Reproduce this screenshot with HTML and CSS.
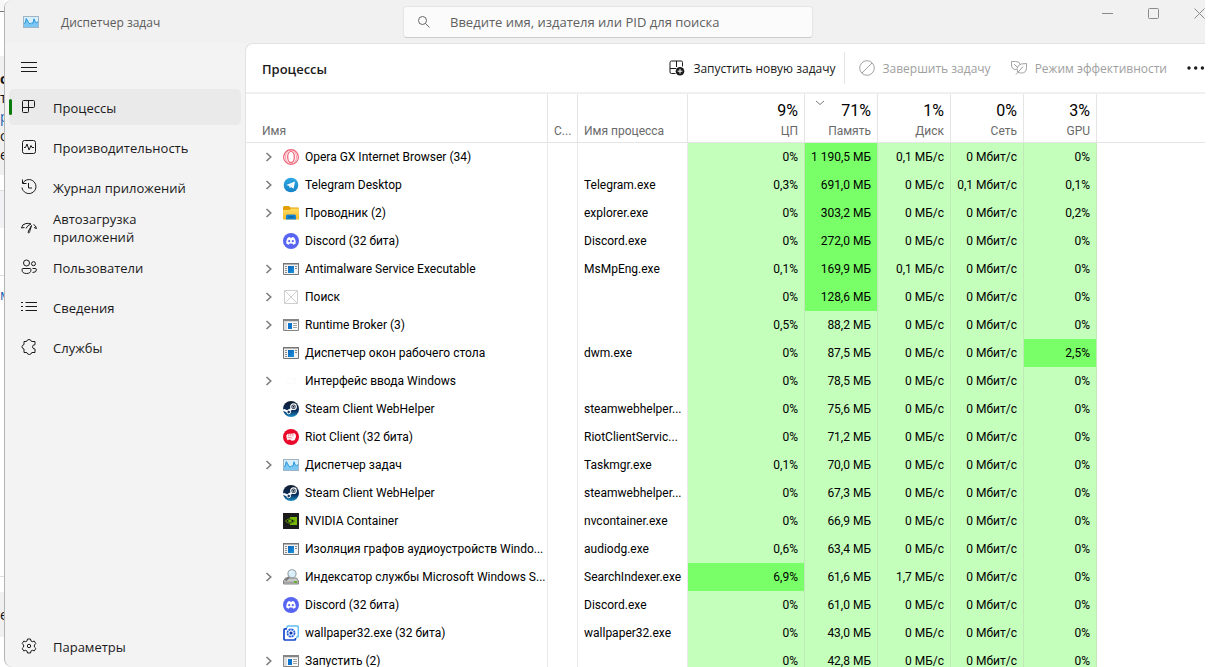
FILE: index.html
```html
<!DOCTYPE html>
<html lang="ru">
<head>
<meta charset="utf-8">
<title>Диспетчер задач</title>
<link rel="stylesheet" href="styles.css">
</head>
<body>
<svg class="sprite" aria-hidden="true">
  <defs>
    <linearGradient id="g-blue" x1="0" y1="0" x2="0" y2="1"><stop offset="0" stop-color="#2fa8e4"/><stop offset="1" stop-color="#1583c6"/></linearGradient>
    <linearGradient id="g-folder" x1="0" y1="0" x2="0" y2="1"><stop offset="0" stop-color="#ffdc62"/><stop offset="1" stop-color="#f7b928"/></linearGradient>
    <linearGradient id="g-steam" x1="0" y1="0" x2="0" y2="1"><stop offset="0" stop-color="#111d2e"/><stop offset=".6" stop-color="#0a2d5c"/><stop offset="1" stop-color="#1a8fc6"/></linearGradient>
    <linearGradient id="g-pane" x1="0" y1="0" x2="1" y2="1"><stop offset="0" stop-color="#0b63b8"/><stop offset="1" stop-color="#1c93dc"/></linearGradient>
  </defs>
  <symbol id="chevron" viewBox="0 0 8 10"><path d="M2.500 1 6.800 5 2.500 9" fill="none" stroke="#7a7a7a" stroke-width="1.500"/></symbol>
  <symbol id="taskmgr" viewBox="0 0 16 16"><rect x=".5" y="2.500" width="15" height="11" fill="#d9effc" stroke="#9fb4c4"/><path d="M1 11V9.500l1.200-.3L3 5l1.600 1.500L6 9l1.200.6L8.500 10l1.200-1L11 5l1 2.500 1.300 1L15 7v6H1z" fill="#7cc6f4"/><path d="M1 9.500l1.300-.5L3.200 4.500l1.500 2.500 1 1.800 1.300 1.200L8.800 9l1.200.3L11 4.800l1.200 3L13.500 9 15 7.500" fill="none" stroke="#2696dc"/></symbol>
  <symbol id="opera" viewBox="0 0 16 16"><circle cx="8" cy="8" r="7.400" fill="#fff4f5" stroke="#ee5a70" stroke-width="1.100"/><ellipse cx="8" cy="8" rx="5.500" ry="7" fill="none" stroke="#f28a9b" stroke-width=".8"/><ellipse cx="8" cy="8" rx="3.300" ry="5.500" fill="#fff" stroke="#ee5a70" stroke-width="1.200"/></symbol>
  <symbol id="telegram" viewBox="0 0 16 16"><circle cx="8" cy="8" r="7.300" fill="url(#g-blue)"/><path d="M3.300 7.900 12 4.500l-1.400 7.200-2.500-1.800-1.300 1.300-.4-2.300z" fill="#fff"/><path d="M6.500 8.900 10.300 6.200 7.300 9.400l-.5 1.700z" fill="#b4dcf3"/></symbol>
  <symbol id="folder" viewBox="0 0 16 16"><path d="M0 2.500Q0 1 1.500 1H6l1.500 1.500H15q1 0 1 1V8H0z" fill="#e2a100"/><path d="M0 5h6.500L8 3.500h8v11H0z" fill="url(#g-folder)"/><path d="M3 14.500V11q0-1.500 1.500-1.500h7Q13 9.500 13 11v3.500z" fill="#1683d0"/><path d="M5.500 12h5" stroke="#07528e" stroke-width="1.200"/></symbol>
  <symbol id="discord" viewBox="0 0 16 16"><circle cx="8" cy="8" r="8" fill="#5865f2"/><path d="M5 4.400 6.700 4l.5.800h1.600l.5-.8 1.700.4c1.300 1.800 1.900 3.700 1.700 6-.8.700-1.600 1.100-2.500 1.300l-.7-1.100H6.500l-.7 1.100c-.9-.2-1.700-.6-2.500-1.300C3.100 8.100 3.700 6.200 5 4.400z" fill="#fff"/><circle cx="6.200" cy="8.200" r="1.100" fill="#5865f2"/><circle cx="9.800" cy="8.200" r="1.100" fill="#5865f2"/></symbol>
  <symbol id="exe" viewBox="0 0 16 16"><path d="M.5 2.500h15v11H.5z" fill="#f2f2f2" stroke="#757575"/><path d="M0 2h16v1.500H0z" fill="#757575"/><path d="M2 5.500h2m-2 2h2m-2 2h2m-2 2h2M12 5.500h2m-2 2h2" stroke="#8b8b8b"/><path d="M5 5h6v7H5z" fill="url(#g-pane)"/></symbol>
  <symbol id="broker" viewBox="0 0 16 16"><path d="M.5 2.500h15v11H.5z" fill="#fafafa" stroke="#858585"/><path d="M0 2h16v2.300H0z" fill="#858585"/><path d="M1 5h3v8H1z" fill="#dedede"/><path d="M5 6h4v6H5z" fill="#1074cc"/><path d="M10 6.500h4m-4 2h4m-4 2h4" stroke="#a0a0a0"/></symbol>
  <symbol id="missing" viewBox="0 0 16 16"><path d="M1.500 1.500h13v13h-13zM2 2l12 12M14 2 2 14" fill="none" stroke="#cfcfcf"/></symbol>
  <symbol id="keyboard" viewBox="0 0 16 16"><path d="M3.500 5.500h9v5h-9z" fill="none" stroke="#fafafa"/></symbol>
  <symbol id="steam" viewBox="0 0 16 16"><circle cx="8" cy="8" r="8" fill="url(#g-steam)"/><path d="M.2 8.700 4.500 10.500 8 8.300l2.200-1.500" fill="none" stroke="#fff" stroke-width="2.200"/><circle cx="10.500" cy="5.700" r="2.800" fill="#13233a" stroke="#fff" stroke-width="1.200"/><circle cx="10.500" cy="5.700" r="1.200" fill="none" stroke="#cfd7e2" stroke-width=".8"/><circle cx="5.700" cy="11" r="1.800" fill="#17375f" stroke="#fff"/></symbol>
  <symbol id="riot" viewBox="0 0 16 16"><circle cx="8" cy="8" r="8" fill="#e9082a"/><path d="M3.300 6.500 4.500 5l7-.8 1.300 1.600.2 2-1.300 3.500-3.200.5-.8-1-1.700-.2-1.400.9-1-2.500z" fill="#fff"/><path d="M5.800 5v2.500M7.800 4.500v2.800M9.900 4.500v3M4.500 8.700h3.500l1.300.8" fill="none" stroke="#e9082a" stroke-width=".5"/></symbol>
  <symbol id="nvidia" viewBox="0 0 16 16"><path d="M0 0h16v16H0z" fill="#1b1b1b"/><path d="M7 4h7v8H7z" fill="#76b900"/><path d="M2 8q4-4 10 0-5 5-10 0z" fill="#1b1b1b"/><path d="M2.500 8Q7 3.500 11.500 8 7 12.500 2.500 8zm2.500 0q2-2.300 4 .2-2 1.800-4-.2z" fill="none" stroke="#629c08" stroke-width=".9"/><circle cx="7" cy="8" r="1.100" fill="#76b900"/></symbol>
  <symbol id="indexer" viewBox="0 0 16 16"><path d="m2.500 9-2 3v3h15v-3l-2-3z" fill="#c8c8c8" stroke="#858585"/><path d="M1 12.500h14v2H1z" fill="#a2a2a2"/><path d="M11 12h3v2h-3z" fill="#62b32d"/><path d="m6 8-3.500 3.500" stroke="#777" stroke-width="2"/><circle cx="9" cy="4.800" r="4.100" fill="#d8effa" stroke="#969fa6" stroke-width="1.100"/><path d="M6.800 4Q7.500 2 9.500 2.200" fill="none" stroke="#fff"/></symbol>
  <symbol id="wallpaper" viewBox="0 0 16 16"><path d="M4 3V2q0-1 1-1h9q1.300 0 1.300 1.300V11q0 1-1.300 1h-1" fill="none" stroke="#60bdf5" stroke-width="1.500"/><path d="M12.500 13v1q0 1-1 1H2q-1 0-1-1V5q0-1.200 1.200-1.200H4" fill="none" stroke="#1746c8" stroke-width="1.700"/><circle cx="8" cy="8" r="3.600" fill="#eaf5ff" stroke="#235bdc" stroke-width="1.700" stroke-dasharray="2.200 .6"/><circle cx="8" cy="8" r="1.600" fill="#1533a8"/></symbol>
</svg>

<div class="desktop">
  <div class="behind" aria-hidden="true">
    <div class="b-top"></div>
    <div class="b-gap"></div>
    <div class="b-post"><b>с</b><span>т</span><span class="blue">р</span><span>об</span><span>е</span></div>
    <div class="b-space"></div>
    <div class="b-bar"></div>
    <div class="b-text"></div>
    <div class="b-long"><span class="blue">м</span></div>
    <div class="b-reply"><span>е</span></div>
    <div class="b-rest"></div>
  </div>

  <div class="window">
    <header class="titlebar">
      <div class="app-name"><svg class="i16"><use href="#taskmgr"/></svg><span>Диспетчер задач</span></div>
      <label class="search">
        <svg class="i16" viewBox="0 0 16 16" fill="none" stroke="#666"><circle cx="6.500" cy="6.500" r="4"/><path d="m9.500 9.500 4 4"/></svg>
        <input type="search" aria-label="Поиск" placeholder="Введите имя, издателя или PID для поиска">
      </label>
      <div class="controls">
        <button type="button" aria-label="Свернуть"><svg viewBox="0 0 11 11"><path d="M0 5.500h11"/></svg></button>
        <button type="button" aria-label="Развернуть"><svg viewBox="0 0 11 11"><rect x=".5" y=".5" width="10" height="10" rx="1"/></svg></button>
        <button type="button" aria-label="Закрыть"><svg viewBox="0 0 11 11"><path d="m.5.5 10 10m0-10-10 10"/></svg></button>
      </div>
    </header>

    <div class="workspace">
      <nav class="sidebar">
        <button type="button" class="burger" aria-label="Меню"><svg class="i16" viewBox="0 0 16 16"><path d="M0 3.500h16M0 8.500h16M0 12.500h16"/></svg></button>
        <a href="#" class="nav-item active"><svg class="i16" viewBox="0 0 16 16"><path d="M2.500 1.500h10q1 0 1 1v5q0 1-1 1h-11m6-7v11q0 1-1 1h-4q-1 0-1-1v-10q0-1 1-1"/></svg><span>Процессы</span></a>
        <a href="#" class="nav-item"><svg class="i16" viewBox="0 0 16 16"><rect x="1.500" y="1.500" width="13" height="13" rx="2"/><path d="M3 8.500h1.500L6 5l2 6 2-4.500 1 2h2"/></svg><span>Производительность</span></a>
        <a href="#" class="nav-item"><svg class="i16" viewBox="0 0 16 16"><path d="M1.500.5v4h4M1.800 4.200A7 7 0 1 1 1 8.500M7.500 4v5H11"/></svg><span>Журнал приложений</span></a>
        <a href="#" class="nav-item narrow"><svg class="i16" viewBox="0 0 16 16"><path d="M.5 9Q1 5 5 4.500q3-.5 5 .5M3.500 8.500l-3 .5M10.500 6.500 7.500 12q-.7 1.800 0 2 .9.200 1.200-1.500l1.800-6zM10 5q-3.500 1-5 4.500M12.500 5.500Q15 6.500 15.500 9.500l-2.500-1"/></svg><span>Автозагрузка приложений</span></a>
        <a href="#" class="nav-item"><svg class="i16" viewBox="0 0 16 16"><circle cx="5.500" cy="4" r="3"/><circle cx="12.500" cy="4.700" r="2"/><path d="M2 9.500h7q1 0 1 1.200 0 3.800-4.500 3.800T1 10.700Q1 9.500 2 9.500zM11.500 9.500H14q1.500 0 1.500 1.300 0 2.700-4 2.700"/></svg><span>Пользователи</span></a>
        <a href="#" class="nav-item"><svg class="i16" viewBox="0 0 16 16"><path d="M4.500 3.500H16m-11.500 4H16m-11.500 4H16M0 3.500h2m-2 4h2m-2 4h2"/></svg><span>Сведения</span></a>
        <a href="#" class="nav-item"><svg class="i16" viewBox="0 0 16 16"><path d="M5.500 2.500Q6 .5 8 .5t2.500 2H14v3.200q-2.500 0-2.500 2.100T14 10v3.500h-3.200q-.5 2-2.500 2t-2.500-2H3V10Q1 9.500 1 7.800t2-2.300v-3z"/></svg><span>Службы</span></a>
        <a href="#" class="nav-item settings"><svg class="i16" viewBox="0 0 16 16"><circle cx="8" cy="8" r="1.700"/><path d="M6.500 1h3l.5 2 1.300.7 2-.6 1.500 2.500L13.400 7v2l1.400 1.400-1.500 2.500-2-.6-1.300.7-.5 2h-3L6 13l-1.300-.7-2 .6-1.500-2.500L2.600 9V7L1.200 5.600l1.500-2.500 2 .6L6 3z"/></svg><span>Параметры</span></a>
      </nav>

      <main class="panel">
        <div class="toolbar">
          <h1>Процессы</h1>
          <button type="button" class="tool"><svg class="i16" viewBox="0 0 16 16" fill="none" stroke="#1a1a1a"><path d="M6.500 13.500h-4q-1.500 0-1.500-1.500V2.500Q1 1 2.500 1h10q1 0 1 1.500v4M1 8.500h6M7.500 1v6"/><circle cx="11" cy="11.200" r="4.300" fill="#1a1a1a" stroke="none"/><path d="M11 8.800v4.800m-2.400-2.400h4.800" stroke="#fff"/></svg><span>Запустить новую задачу</span></button>
          <span class="divider"></span>
          <button type="button" class="tool" disabled><svg class="i16" viewBox="0 0 16 16" fill="none" stroke="#a2a2a2"><circle cx="8" cy="8" r="7.300"/><path d="m3 13 10-10"/></svg><span>Завершить задачу</span></button>
          <button type="button" class="tool" disabled><svg class="i16" viewBox="0 0 16 16" fill="none" stroke="#a2a2a2"><path d="M5.500 9.500Q.5 9.500.5 5V1.500h4q4 0 4.500 2.500M3 4l4 4M6.500 12Q5 8 7.500 5.500 9 3.500 15.500 3.500v4q0 5.500-5 5.500-2.500 0-4-1M12 6.500 5 14.500"/></svg><span>Режим эффективности</span></button>
          <button type="button" class="more" aria-label="Ещё"><svg viewBox="0 0 18 4"><circle cx="2" cy="2" r="1.700"/><circle cx="8.700" cy="2" r="1.700"/><circle cx="15.400" cy="2" r="1.700"/></svg></button>
        </div>

        <div class="table-area">
          <table>
            <colgroup><col class="c-name"><col class="c-status"><col class="c-proc"><col class="c-cpu"><col class="c-num"><col class="c-num"><col class="c-num"><col class="c-num"><col></colgroup>
            <thead>
              <tr>
                <th class="first">Имя</th><th>С...</th><th>Имя процесса</th>
                <th class="n"><b>9%</b>ЦП</th>
                <th class="n sorted"><svg viewBox="0 0 10 6"><path d="m1 1 4 3.500L9 1"/></svg><b>71%</b>Память</th>
                <th class="n"><b>1%</b>Диск</th><th class="n"><b>0%</b>Сеть</th><th class="n"><b>3%</b>GPU</th><th class="rest"></th>
              </tr>
            </thead>
            <tbody>
              <tr><td><div class="name"><svg class="chev"><use href="#chevron"/></svg><svg class="i16"><use href="#opera"/></svg><span>Opera GX Internet Browser (34)</span></div></td><td></td><td></td><td class="n">0%</td><td class="n hot">1 190,5 МБ</td><td class="n">0,1 МБ/с</td><td class="n">0 Мбит/с</td><td class="n">0%</td><td class="rest"></td></tr>
              <tr><td><div class="name"><svg class="chev"><use href="#chevron"/></svg><svg class="i16"><use href="#telegram"/></svg><span>Telegram Desktop</span></div></td><td></td><td>Telegram.exe</td><td class="n">0,3%</td><td class="n hot">691,0 МБ</td><td class="n">0 МБ/с</td><td class="n">0,1 Мбит/с</td><td class="n">0,1%</td><td class="rest"></td></tr>
              <tr><td><div class="name"><svg class="chev"><use href="#chevron"/></svg><svg class="i16"><use href="#folder"/></svg><span>Проводник (2)</span></div></td><td></td><td>explorer.exe</td><td class="n">0%</td><td class="n hot">303,2 МБ</td><td class="n">0 МБ/с</td><td class="n">0 Мбит/с</td><td class="n">0,2%</td><td class="rest"></td></tr>
              <tr><td><div class="name"><svg class="chev"></svg><svg class="i16"><use href="#discord"/></svg><span>Discord (32 бита)</span></div></td><td></td><td>Discord.exe</td><td class="n">0%</td><td class="n hot">272,0 МБ</td><td class="n">0 МБ/с</td><td class="n">0 Мбит/с</td><td class="n">0%</td><td class="rest"></td></tr>
              <tr><td><div class="name"><svg class="chev"><use href="#chevron"/></svg><svg class="i16"><use href="#exe"/></svg><span>Antimalware Service Executable</span></div></td><td></td><td>MsMpEng.exe</td><td class="n">0,1%</td><td class="n hot">169,9 МБ</td><td class="n">0,1 МБ/с</td><td class="n">0 Мбит/с</td><td class="n">0%</td><td class="rest"></td></tr>
              <tr><td><div class="name"><svg class="chev"><use href="#chevron"/></svg><svg class="i16"><use href="#missing"/></svg><span>Поиск</span></div></td><td></td><td></td><td class="n">0%</td><td class="n hot">128,6 МБ</td><td class="n">0 МБ/с</td><td class="n">0 Мбит/с</td><td class="n">0%</td><td class="rest"></td></tr>
              <tr><td><div class="name"><svg class="chev"><use href="#chevron"/></svg><svg class="i16"><use href="#broker"/></svg><span>Runtime Broker (3)</span></div></td><td></td><td></td><td class="n">0,5%</td><td class="n">88,2 МБ</td><td class="n">0 МБ/с</td><td class="n">0 Мбит/с</td><td class="n">0%</td><td class="rest"></td></tr>
              <tr><td><div class="name"><svg class="chev"></svg><svg class="i16"><use href="#exe"/></svg><span>Диспетчер окон рабочего стола</span></div></td><td></td><td>dwm.exe</td><td class="n">0%</td><td class="n">87,5 МБ</td><td class="n">0 МБ/с</td><td class="n">0 Мбит/с</td><td class="n hot">2,5%</td><td class="rest"></td></tr>
              <tr><td><div class="name"><svg class="chev"><use href="#chevron"/></svg><svg class="i16"><use href="#keyboard"/></svg><span>Интерфейс ввода Windows</span></div></td><td></td><td></td><td class="n">0%</td><td class="n">78,5 МБ</td><td class="n">0 МБ/с</td><td class="n">0 Мбит/с</td><td class="n">0%</td><td class="rest"></td></tr>
              <tr><td><div class="name"><svg class="chev"></svg><svg class="i16"><use href="#steam"/></svg><span>Steam Client WebHelper</span></div></td><td></td><td>steamwebhelper...</td><td class="n">0%</td><td class="n">75,6 МБ</td><td class="n">0 МБ/с</td><td class="n">0 Мбит/с</td><td class="n">0%</td><td class="rest"></td></tr>
              <tr><td><div class="name"><svg class="chev"></svg><svg class="i16"><use href="#riot"/></svg><span>Riot Client (32 бита)</span></div></td><td></td><td>RiotClientServic...</td><td class="n">0%</td><td class="n">71,2 МБ</td><td class="n">0 МБ/с</td><td class="n">0 Мбит/с</td><td class="n">0%</td><td class="rest"></td></tr>
              <tr><td><div class="name"><svg class="chev"><use href="#chevron"/></svg><svg class="i16"><use href="#taskmgr"/></svg><span>Диспетчер задач</span></div></td><td></td><td>Taskmgr.exe</td><td class="n">0,1%</td><td class="n">70,0 МБ</td><td class="n">0 МБ/с</td><td class="n">0 Мбит/с</td><td class="n">0%</td><td class="rest"></td></tr>
              <tr><td><div class="name"><svg class="chev"></svg><svg class="i16"><use href="#steam"/></svg><span>Steam Client WebHelper</span></div></td><td></td><td>steamwebhelper...</td><td class="n">0%</td><td class="n">67,3 МБ</td><td class="n">0 МБ/с</td><td class="n">0 Мбит/с</td><td class="n">0%</td><td class="rest"></td></tr>
              <tr><td><div class="name"><svg class="chev"></svg><svg class="i16"><use href="#nvidia"/></svg><span>NVIDIA Container</span></div></td><td></td><td>nvcontainer.exe</td><td class="n">0%</td><td class="n">66,9 МБ</td><td class="n">0 МБ/с</td><td class="n">0 Мбит/с</td><td class="n">0%</td><td class="rest"></td></tr>
              <tr><td><div class="name"><svg class="chev"></svg><svg class="i16"><use href="#exe"/></svg><span>Изоляция графов аудиоустройств Windo...</span></div></td><td></td><td>audiodg.exe</td><td class="n">0,6%</td><td class="n">63,4 МБ</td><td class="n">0 МБ/с</td><td class="n">0 Мбит/с</td><td class="n">0%</td><td class="rest"></td></tr>
              <tr><td><div class="name"><svg class="chev"><use href="#chevron"/></svg><svg class="i16"><use href="#indexer"/></svg><span>Индексатор службы Microsoft Windows S...</span></div></td><td></td><td>SearchIndexer.exe</td><td class="n hot">6,9%</td><td class="n">61,6 МБ</td><td class="n">1,7 МБ/с</td><td class="n">0 Мбит/с</td><td class="n">0%</td><td class="rest"></td></tr>
              <tr><td><div class="name"><svg class="chev"></svg><svg class="i16"><use href="#discord"/></svg><span>Discord (32 бита)</span></div></td><td></td><td>Discord.exe</td><td class="n">0%</td><td class="n">61,0 МБ</td><td class="n">0 МБ/с</td><td class="n">0 Мбит/с</td><td class="n">0%</td><td class="rest"></td></tr>
              <tr><td><div class="name"><svg class="chev"></svg><svg class="i16"><use href="#wallpaper"/></svg><span>wallpaper32.exe (32 бита)</span></div></td><td></td><td>wallpaper32.exe</td><td class="n">0%</td><td class="n">43,0 МБ</td><td class="n">0 МБ/с</td><td class="n">0 Мбит/с</td><td class="n">0%</td><td class="rest"></td></tr>
              <tr><td><div class="name"><svg class="chev"><use href="#chevron"/></svg><svg class="i16"><use href="#broker"/></svg><span>Запустить (2)</span></div></td><td></td><td></td><td class="n">0%</td><td class="n">42,8 МБ</td><td class="n">0 МБ/с</td><td class="n">0 Мбит/с</td><td class="n">0%</td><td class="rest"></td></tr>
            </tbody>
          </table>
        </div>
      </main>
    </div>
  </div>
</div>
</body>
</html>
```
FILE: styles.css
```css
* { box-sizing: border-box; }

body {
  margin: 0;
  background: #fff;
  color: #1a1a1a;
  font: 12px/16px "Open Sans", "Noto Sans", sans-serif;
  overflow: hidden;
}

button { border: 0; padding: 0; background: none; color: inherit; font: inherit; }
svg { display: block; flex: none; }
.sprite { position: absolute; width: 0; height: 0; }
.i16 { width: 16px; height: 16px; }

.desktop { display: flex; height: 100vh; padding-right: 15px; }

/* strip of the page that lies under the window */
.behind { display: flex; flex-direction: column; flex: none; width: 4px; overflow: hidden; font-size: 14px; line-height: 19px; color: #111; }
.behind span, .behind b { display: block; }
.behind .blue { color: #1c5fb0; }
.b-top { height: 12px; background: #f7f7f7; border-bottom: 1px solid #777; }
.b-gap { height: 44px; }
.b-post { height: 119px; padding-top: 13px; background: #f0f0f0; }
.b-space { height: 15px; }
.b-bar { height: 38px; border-top: 1px solid #ddd; background: #f2f2f4; }
.b-text { height: 48px; border-bottom: 1px solid #ddd; }
.b-long { height: 301px; padding-top: 9px; border-bottom: 1px solid #ddd; }
.b-reply { height: 60px; border-top: 15px solid #fff; padding-top: 13px; background: #f0f0f0; }
.b-rest { flex: 1; }

.window {
  display: flex;
  flex-direction: column;
  flex: 1;
  min-width: 0;
  border-left: 1px solid #b4b4b4;
  border-radius: 8px 0 0 8px;
  background: #f3f3f3;
  overflow: hidden;
}

.titlebar { display: flex; flex: none; height: 43px; background: #f1f1f1; }
.app-name { display: flex; align-items: center; flex: 1; gap: 22px; height: 46px; padding-left: 18px; color: #5c5c5c; }
.app-name svg { margin-bottom: 2px; }
.search {
  display: flex;
  align-items: center;
  gap: 18px;
  width: 410px;
  height: 32px;
  margin: 6px 12px 0 0;
  padding: 0 12px;
  border: 1px solid #e5e5e5;
  border-bottom-color: #ccc;
  border-radius: 4px;
  background: #fbfbfb;
}
.search input { flex: 1; min-width: 0; border: 0; padding: 0; outline: 0; background: none; font: 13px/20px "Open Sans", sans-serif; }
.search input::placeholder { color: #606060; opacity: 1; }
.controls { display: flex; flex: 1; justify-content: flex-end; gap: 35px; padding-top: 8px; }
.controls button { display: flex; height: 11px; }
.controls svg { width: 11px; height: 11px; fill: none; stroke: #8a8a8a; }

.workspace { display: flex; flex: 1; min-height: 0; }

.sidebar { display: flex; flex-direction: column; gap: 4px; flex: none; width: 240px; padding: 6px 4px 3px; font-size: 13px; line-height: 18px; }
.sidebar svg { fill: none; stroke: #1a1a1a; }
.burger { display: flex; align-items: center; height: 36px; padding-left: 12px; }
.nav-item { position: relative; display: flex; align-items: center; gap: 16px; height: 36px; padding: 0 12px; border-radius: 5px; color: #1a1a1a; text-decoration: none; }
.nav-item span { padding-top: 2px; }
.nav-item.narrow { padding-right: 60px; }
.nav-item.active { background: #eaeaea; }
.nav-item.active::before { content: ""; position: absolute; left: 0; top: 10px; width: 3px; height: 16px; border-radius: 2px; background: #0a7a0a; }
.settings { margin-top: auto; }

.panel { display: flex; flex-direction: column; flex: 1; min-width: 0; border: 1px solid #e2e2e2; border-width: 1px 0 0 1px; border-radius: 8px 0 0 0; background: #fff; overflow: hidden; }
.toolbar { display: flex; align-items: center; flex: none; height: 50px; padding-left: 16px; border-bottom: 2px solid #f0f0f0; }
.toolbar h1 { margin: 2px auto 0 0; font-size: 13px; line-height: 20px; font-weight: 600; }
.tool { display: flex; align-items: center; gap: 8px; white-space: nowrap; }
.tool span { padding-top: 2px; }
.tool:disabled { color: #a0a0a0; }
.tool + .tool { margin-left: 20px; }
.divider { width: 1px; height: 32px; margin: 0 14px 0 8px; background: #e5e5e5; }
.more { margin-left: 20px; }
.more svg { width: 18px; height: 4px; fill: #1a1a1a; }

.table-area { flex: 1; min-height: 0; overflow: hidden; color: #000; font-family: Roboto, "Open Sans", sans-serif; }
table { width: 100%; border-collapse: separate; border-spacing: 0; table-layout: fixed; }
.c-name { width: 302px; }
.c-status { width: 30px; }
.c-proc { width: 110px; }
.c-cpu { width: 117px; }
.c-num { width: 73px; }

th { position: relative; height: 49px; padding: 0 6px 3px; border-right: 1px solid #e5e5e5; border-bottom: 1px solid #e5e5e5; color: #6a6a6a; font-weight: 400; text-align: left; vertical-align: bottom; white-space: nowrap; }
th.first { padding-left: 16px; }
th b { display: block; color: #000; font-size: 16px; line-height: 24px; font-weight: 400; }
th svg { position: absolute; left: 10px; top: 6px; width: 10px; height: 6px; fill: none; stroke: #777; }
td { height: 28px; padding: 0 6px; border-right: 1px solid #e9e9e9; white-space: nowrap; }
.n { text-align: right; }
td.n { background: #c4ffbb; border-right-color: #bfeab8; }
td.hot { background: #79ff67; }
th.rest, td.rest { border-right: 0; }
td:first-child { padding-left: 18px; }
.name { display: flex; align-items: center; }
.chev { width: 8px; height: 10px; margin-right: 11px; }
.name .i16 { margin-right: 6px; }
```
